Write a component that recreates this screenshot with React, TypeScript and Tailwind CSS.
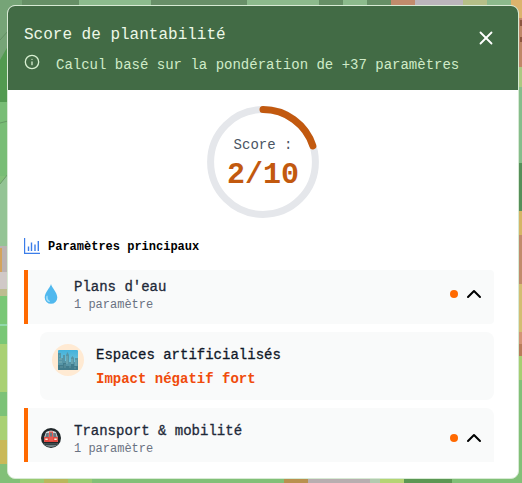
import React from "react";
import { ChevronUp, Info, X } from "lucide-react";

function MapBackdrop() {
  return (
    <svg className="absolute inset-0 h-full w-full" viewBox="0 0 522 483" preserveAspectRatio="none" aria-hidden="true">
      <rect width="522" height="483" fill="#82c078" />
      <g>
        <rect width="22" height="60" fill="#76a477" />
        <rect x="22" width="57" height="8" fill="#668f66" />
        <rect x="79" width="72" height="8" fill="#8cbb8d" />
        <rect x="151" width="96" height="8" fill="#688f68" />
        <rect x="247" width="72" height="8" fill="#8cba8c" />
        <rect x="319" width="24" height="8" fill="#668f66" />
        <rect x="343" width="24" height="8" fill="#8cba8c" />
        <rect x="367" width="24" height="8" fill="#668f66" />
        <rect x="391" width="24" height="8" fill="#c18b6c" />
        <rect x="415" width="48" height="8" fill="#bbb5bb" />
        <rect x="463" width="24" height="8" fill="#b5bf88" />
        <rect x="487" width="24" height="8" fill="#8cba8c" />
        <rect x="511" width="11" height="18" fill="#dcb36c" />
      </g>
      <g>
        <path d="M0 60 8 46V102H0Z" fill="#529a50" />
        <rect y="102" width="8" height="74" fill="#78bd75" />
        <path d="M0 184 8 174V246H0Z" fill="#94c495" />
        <path d="M0 40 8 31M0 123 8 121M0 184 8 174" stroke="#568256" strokeOpacity=".6" fill="none" />
        <rect y="246" width="8" height="26" fill="#bbb2b1" />
        <rect y="248" width="2" height="30" fill="#d3a45d" />
        <rect y="272" width="8" height="17" fill="#d0c9c7" />
        <rect y="289" width="8" height="7" fill="#bdbd90" />
        <rect y="296" width="8" height="48" fill="#79c776" />
        <path d="M0 325H8" stroke="#91d9ab" strokeWidth="2" />
        <rect y="344" width="8" height="48" fill="#a9d174" />
        <rect y="392" width="8" height="24" fill="#7cc277" />
        <rect y="416" width="8" height="24" fill="#a9d174" />
        <rect y="440" width="8" height="24" fill="#c9b958" />
      </g>
      <g>
        <rect x="517" y="18" width="5" height="49" fill="#bf8767" />
        <path d="M521 20V26M521 37V42" stroke="#8d563f" strokeWidth="2" />
        <rect x="517" y="67" width="5" height="20" fill="#abc881" />
        <rect x="517" y="87" width="5" height="76" fill="#86bd8b" />
        <rect x="517" y="163" width="5" height="48" fill="#568f59" />
        <rect x="517" y="211" width="5" height="24" fill="#d5b565" />
        <rect x="517" y="235" width="5" height="49" fill="#c18b6b" />
        <rect x="517" y="284" width="5" height="48" fill="#d3bd72" />
        <rect x="517" y="332" width="5" height="12" fill="#d39475" />
        <rect x="517" y="344" width="5" height="12" fill="#b87c59" />
        <rect x="517" y="356" width="5" height="24" fill="#a6ce72" />
      </g>
      <g>
        <rect x="20" y="476" width="24" height="7" fill="#9aca73" />
        <rect x="44" y="476" width="24" height="7" fill="#b9b75c" />
        <rect x="68" y="476" width="24" height="7" fill="#9aca73" />
        <rect x="284" y="476" width="24" height="7" fill="#b9914f" />
        <rect x="308" y="476" width="62" height="7" fill="#b8aeb0" />
        <rect x="370" y="476" width="10" height="7" fill="#b2cbb0" />
        <rect x="380" y="476" width="24" height="7" fill="#b5d474" />
        <rect x="404" y="476" width="48" height="7" fill="#5c9753" />
      </g>
    </svg>
  );
}

function Gauge() {
  return (
    <div className="relative mx-auto size-28">
      <svg className="size-28" viewBox="0 0 112 112" fill="none">
        <circle cx="56" cy="56" r="52.4" stroke="#e5e7eb" strokeWidth="7" />
        <circle
          cx="56" cy="56" r="52.4" stroke="#c2590f" strokeWidth="7" strokeLinecap="round"
          pathLength="100" strokeDasharray="20 80" transform="rotate(-90 56 56)"
        />
      </svg>
      <div className="absolute inset-0 flex flex-col items-center pt-[29px]">
        <span className="text-sm leading-5 text-[#4b5563]">Score :</span>
        <span className="text-3xl leading-10 font-bold text-[#c2590f]">2/10</span>
      </div>
    </div>
  );
}

function BarsIcon() {
  return (
    <svg className="size-4" viewBox="0 0 16 16" fill="none" stroke="#3b7de9">
      <path d="M.6 0V15.4H16" strokeWidth="1.2" />
      <path d="M4.5 8.5V13M7.5 4.5V13M11 6.5V13M14.3 3V13" strokeWidth="1.4" />
    </svg>
  );
}

function WaterDrop() {
  return (
    <svg className="h-5 w-[14px]" viewBox="0 0 14 20">
      <path d="M7 0C6.2 3.8.7 8.5.7 13.5a6.3 6.3 0 0 0 12.6 0C13.3 8.5 7.8 3.8 7 0Z" fill="#50b8ee" />
      <path d="M2.4 12.2c-.8 3.3.8 5.3 2.8 5.8 1 .1.9-.7.3-1.2-1.5-1.2-2-2.6-1.9-4.4 0-1.1-.9-1.2-1.2-.2Z" fill="#a6e1fb" />
    </svg>
  );
}

function Metro() {
  return (
    <svg className="size-5" viewBox="0 0 20 20">
      <circle cx="10" cy="10" r="10" fill="#20272a" />
      <path d="M2.5 15.5h15A9 9 0 0 1 10 19a9 9 0 0 1-7.5-3.5Z" fill="#718083" />
      <path d="M4 16.3h12" stroke="#263033" strokeWidth="1" />
      <path d="M5 4Q10 1 15 4L16.8 9v5H3.2V9Z" fill="#d0d5d8" />
      <path d="M3.2 9h13.6v5H3.2Z" fill="#e5473e" />
      <path d="M5.4 5h2.4v4H4.3Zm6.8 0h2.4l1.1 4h-3.5Z" fill="#68757d" />
      <path d="M8 3.5h4v9.5H8Z" fill="#e85b51" />
      <path d="M9 4.8h2v3.6H9Z" fill="#6b7a83" />
      <path d="M4.3 11.2h2.4M13.3 11.2h2.4" stroke="#fff0dc" strokeWidth="1.4" />
    </svg>
  );
}

function City() {
  return (
    <svg className="size-5" viewBox="0 0 20 20">
      <defs>
        <linearGradient id="citySky" x1="0" y1="0" x2="0" y2="1">
          <stop stopColor="#42b2dc" />
          <stop offset="1" stopColor="#8dcbd6" />
        </linearGradient>
      </defs>
      <rect width="20" height="20" rx="1" fill="url(#citySky)" />
      <path d="M0 3h3v5h2V5h2v6h1V5l1.5-3L11 5v7h2V8l1.5-2L16 8v4h1V8h3v12H0Z" fill="#5695a6" />
      <path d="M1 6h1M1 9h3M1 12h3M9 6v8M14 9v7M18 10v7" stroke="#86b9bd" strokeWidth=".8" />
      <path d="M0 15h5v-2h3v3h5v-2h3v2h4v3a1 1 0 0 1-1 1H1a1 1 0 0 1-1-1Z" fill="#417c8c" />
      <path d="M2 17h3M7 14v4M11 17h2M16 18h2" stroke="#699da4" strokeWidth=".8" />
    </svg>
  );
}

function CategoryRow({ icon, title, className }: { icon: React.ReactNode; title: string; className: string }) {
  return (
    <div className={`flex h-[54px] items-center border-l-4 border-[#ff6900] bg-[#f9fafa] pr-2 pl-3 ${className}`}>
      <div className="flex w-[22px] justify-center">{icon}</div>
      <div className="ml-3 flex-1 pt-px">
        <div className="text-sm leading-5 text-[#1e2939] [-webkit-text-stroke:0.3px_#1e2939]">{title}</div>
        <div className="text-xs leading-4 text-[#6a7282]">1 paramètre</div>
      </div>
      <span className="size-2 rounded-full bg-[#ff6900]" />
      <ChevronUp className="ml-1 size-6 text-black" strokeWidth={2} />
    </div>
  );
}

export default function App() {
  return (
    <div className="relative h-[483px] w-[522px] overflow-hidden pt-[5px] pl-[7px] font-['Liberation_Mono',monospace]">
      <MapBackdrop />
      <div className="relative h-[474px] w-[512px] overflow-hidden rounded-lg border border-[#d7ead4] bg-white">
        <header className="flex h-[84px] justify-between bg-[#426b45] pt-4 pr-[21px] pl-4">
          <div>
            <h1 className="pt-px text-base leading-6 text-[#edf8e7]">Score de plantabilité</h1>
            <div className="mt-[7px] flex items-start">
              <Info className="size-4 text-[#d7efd0]" strokeWidth={2} />
              <p className="ml-4 pt-px text-sm leading-5 whitespace-nowrap text-[#d0ebc8]">
                Calcul basé sur la pondération de +37 paramètres
              </p>
            </div>
          </div>
          <X className="mt-[5px] size-[22px] text-white" strokeWidth={2} />
        </header>
        <main className="pt-4 pr-6 pl-4">
          <div className="-mr-2"><Gauge /></div>
          <div className="mt-5 flex h-4 items-center gap-2">
            <BarsIcon />
            <h2 className="pt-px text-xs leading-4 font-bold text-black">Paramètres principaux</h2>
          </div>
          <div className="mt-4 flex flex-col gap-2">
            <CategoryRow icon={<WaterDrop />} title="Plans d'eau" className="rounded-r pb-1.5" />
            <div className="ml-4 flex h-[68px] gap-3 rounded-lg bg-[#f9fafa] p-3">
              <div className="flex size-8 items-center justify-center rounded-full bg-[#ffead3]"><City /></div>
              <div className="pt-px">
                <div className="text-sm leading-5 text-[#101828] [-webkit-text-stroke:0.3px_#101828]">Espaces artificialisés</div>
                <div className="mt-1 text-sm leading-5 font-bold text-[#f04b0b]">Impact négatif fort</div>
              </div>
            </div>
            <CategoryRow icon={<Metro />} title="Transport & mobilité" className="rounded-tr-lg pt-1.5" />
          </div>
        </main>
      </div>
    </div>
  );
}
